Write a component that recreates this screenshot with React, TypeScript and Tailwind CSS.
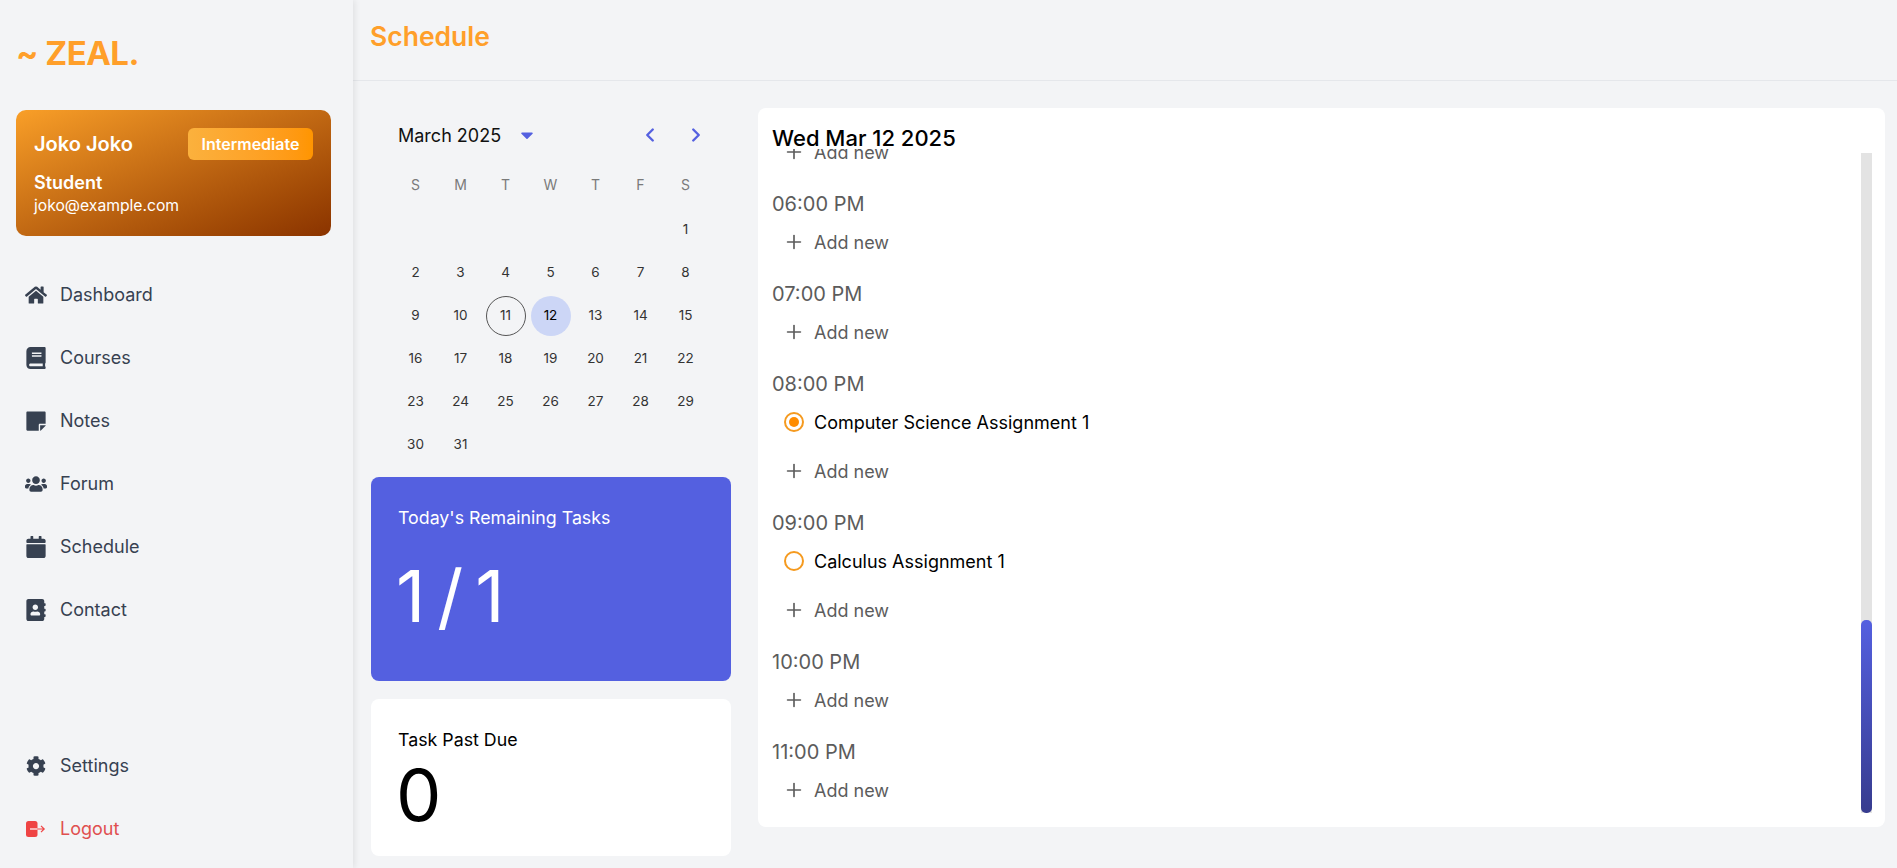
import { ChevronLeft, ChevronRight, Plus } from "lucide-react";
import type { ReactNode } from "react";
import {
  FaAddressBook,
  FaBook,
  FaCalendar,
  FaCaretDown,
  FaCog,
  FaHome,
  FaStickyNote,
  FaUsers,
} from "react-icons/fa";

const navItems: { label: string; icon: ReactNode }[] = [
  { label: "Dashboard", icon: <FaHome className="h-[22px] w-[22px]" /> },
  { label: "Courses", icon: <FaBook className="h-[22px] w-[22px]" /> },
  { label: "Notes", icon: <FaStickyNote className="h-[22px] w-[22px]" /> },
  { label: "Forum", icon: <FaUsers className="h-[22px] w-[22px]" /> },
  { label: "Schedule", icon: <FaCalendar className="h-[22px] w-[22px]" /> },
  { label: "Contact", icon: <FaAddressBook className="h-[22px] w-[22px]" /> },
];

const weekDays = ["S", "M", "T", "W", "T", "F", "S"];

const weeks: (number | null)[][] = [
  [null, null, null, null, null, null, 1],
  [2, 3, 4, 5, 6, 7, 8],
  [9, 10, 11, 12, 13, 14, 15],
  [16, 17, 18, 19, 20, 21, 22],
  [23, 24, 25, 26, 27, 28, 29],
  [30, 31, null, null, null, null, null],
];

const slots: { time: string; task?: string; done?: boolean }[] = [
  { time: "06:00 PM" },
  { time: "07:00 PM" },
  { time: "08:00 PM", task: "Computer Science Assignment 1", done: true },
  { time: "09:00 PM", task: "Calculus Assignment 1" },
  { time: "10:00 PM" },
  { time: "11:00 PM" },
];

function LogoutIcon() {
  return (
    <svg viewBox="0 0 20 16" className="h-[16px] w-[20px]" fill="none">
      <rect x="0" y="0" width="11.5" height="16" rx="2.5" fill="#ef4444" />
      <path d="M4 8h7.5" stroke="#fff" strokeWidth="1.2" />
      <path d="M11.5 8h6.5M15 4.8 18.2 8 15 11.2" stroke="#ef4444" strokeWidth="1.2" />
    </svg>
  );
}

function AddNew({ className = "" }: { className?: string }) {
  return (
    <div className={`flex h-[38px] shrink-0 items-center text-[18px] text-[#5c5c5c] ${className}`}>
      <span className="flex w-[42px] justify-center pl-[2px]">
        <Plus className="h-[22px] w-[22px]" strokeWidth={1.8} />
      </span>
      <span>Add new</span>
    </div>
  );
}

function NavItem({ label, icon }: { label: string; icon: ReactNode }) {
  return (
    <div className="flex h-[63px] items-center text-[#374151]">
      <span className="flex w-[36px] justify-center">{icon}</span>
      <span className="ml-[6px] text-[18px]">{label}</span>
    </div>
  );
}

function Sidebar() {
  return (
    <aside className="z-10 flex h-full w-[353px] shrink-0 flex-col bg-[#f3f4f6] px-[16px] shadow-[2px_0_6px_rgba(0,0,0,0.08)]">
      <div className="mt-[32px] flex h-[44px] items-center text-[33px] font-bold tracking-[-0.5px] text-[#ff9f2a]">
        ~ ZEAL.
      </div>

      <div className="mt-[34px] h-[126px] w-[315px] rounded-[10px] bg-gradient-to-br from-[#f99f28] to-[#8a3300] px-[18px] pt-[18px] text-white">
        <div className="flex h-[32px] items-center justify-between">
          <span className="text-[20px] font-semibold">Joko Joko</span>
          <span className="flex h-[32px] w-[125px] items-center justify-center rounded-[6px] bg-gradient-to-r from-[#fbb13d] to-[#ff9500] pb-[1px] text-[16px] font-semibold">
            Intermediate
          </span>
        </div>
        <div className="mt-[11px] text-[18px] leading-[24px] font-semibold">Student</div>
        <div className="text-[15.7px] leading-[22px]">joko@example.com</div>
      </div>

      <nav className="mt-[27px] flex flex-col pl-[2px]">
        {navItems.map((item) => (
          <NavItem key={item.label} {...item} />
        ))}
      </nav>

      <div className="mt-auto mb-[8px] flex flex-col pl-[2px]">
        <NavItem label="Settings" icon={<FaCog className="h-[20px] w-[20px]" />} />
        <div className="flex h-[63px] items-center">
          <span className="flex w-[36px] justify-center">
            <LogoutIcon />
          </span>
          <span className="ml-[6px] text-[18px] text-[#e04f4f]">Logout</span>
        </div>
      </div>
    </aside>
  );
}

function Calendar() {
  return (
    <div className="px-[18px] pt-[11px]">
      <div className="flex h-[32px] items-center justify-between pr-[6px] pl-[9px]">
        <div className="flex items-center">
          <span className="text-[18px] text-[#111]">March 2025</span>
          <FaCaretDown className="ml-[16px] h-[20px] w-[20px] text-[#5460e0]" />
        </div>
        <div className="flex items-center gap-[24px] text-[#5460e0]">
          <ChevronLeft className="h-[22px] w-[22px]" strokeWidth={2.6} />
          <ChevronRight className="h-[22px] w-[22px]" strokeWidth={2.6} />
        </div>
      </div>

      <div className="mt-[16px] grid grid-cols-[repeat(7,45px)] pl-[4px] text-center">
        {weekDays.map((day, i) => (
          <div key={i} className="flex h-[34px] items-center justify-center text-[14px] text-[#7a7a7a]">
            {day}
          </div>
        ))}
      </div>

      <div className="mt-[7px] grid grid-cols-[repeat(7,45px)] grid-rows-[repeat(6,43px)] pl-[4px] text-[#333]">
        {weeks.flat().map((d, i) => (
          <div key={i} className="flex items-center justify-center text-[13.5px]">
            {d === 11 ? (
              <span className="flex h-[40px] w-[40px] items-center justify-center rounded-full border border-[#555]">
                {d}
              </span>
            ) : d === 12 ? (
              <span className="flex h-[40px] w-[40px] items-center justify-center rounded-full bg-[#ccd6f6] text-black">
                {d}
              </span>
            ) : (
              d
            )}
          </div>
        ))}
      </div>
    </div>
  );
}

function Schedule() {
  return (
    <section className="flex h-[719px] w-[1127px] flex-col rounded-[8px] bg-white pl-[14px]">
      <h2 className="mt-[14px] h-[31px] text-[22px] leading-[32px] font-medium text-black">Wed Mar 12 2025</h2>
      <div className="flex min-h-0 flex-1 pr-[13px] pb-[14px]">
        <div className="-mt-[4px] flex min-w-0 flex-1 flex-col justify-end overflow-hidden pb-[4px]">
          <AddNew className="mb-[14px]" />
          {slots.map((slot) => (
            <div key={slot.time} className="shrink-0 pb-[14px] last:pb-0">
              <div className="flex h-[38px] items-center text-[20px] text-[#5c5c5c]">{slot.time}</div>
              {slot.task && (
                <div className="flex h-[38px] items-center text-[18px] text-black">
                  <span className="flex w-[42px] justify-center pl-[2px]">
                    <span className="flex h-[20px] w-[20px] items-center justify-center rounded-full border-2 border-[#f59a1f]">
                      {slot.done && <span className="h-[10px] w-[10px] rounded-full bg-[#ff8c00]" />}
                    </span>
                  </span>
                  <span>{slot.task}</span>
                </div>
              )}
              <AddNew className={slot.task ? "mt-[11px]" : ""} />
            </div>
          ))}
        </div>
        <div className="flex w-[11px] shrink-0 flex-col justify-end bg-[#e3e3e3]">
          <div className="h-[193px] rounded-[5px] bg-gradient-to-b from-[#5460e0] to-[#373c8f]" />
        </div>
      </div>
    </section>
  );
}

export default function App() {
  return (
    <div className="flex h-[868px] w-[1897px] overflow-hidden bg-[#f3f4f6] font-['Inter',sans-serif]">
      <Sidebar />
      <main className="flex min-w-0 flex-1 flex-col">
        <header className="flex h-[81px] shrink-0 items-center border-b border-[#e5e7eb] pb-[7px] pl-[17px] text-[26.5px] font-semibold text-[#ff9f2a]">
          Schedule
        </header>
        <div className="flex min-h-0 flex-1 pt-[27px] pl-[18px]">
          <div className="flex w-[360px] shrink-0 flex-col">
            <Calendar />
            <div className="mt-[11px] h-[204px] shrink-0 rounded-[8px] bg-[#5460e0] px-[27px] pt-[29px] text-white">
              <div className="text-[17.8px] leading-[24px]">Today's Remaining Tasks</div>
              <div className="mt-[24px] ml-[-2px] text-[72px] leading-[84px] tracking-[12px]">1/1</div>
            </div>
            <div className="mt-[18px] h-[157px] shrink-0 rounded-[8px] bg-white px-[27px] pt-[29px] text-black">
              <div className="text-[17.8px] leading-[24px]">Task Past Due</div>
              <div className="mt-[1px] ml-[-2px] text-[72px] leading-[84px]">0</div>
            </div>
          </div>
          <div className="ml-[27px]">
            <Schedule />
          </div>
        </div>
      </main>
    </div>
  );
}
